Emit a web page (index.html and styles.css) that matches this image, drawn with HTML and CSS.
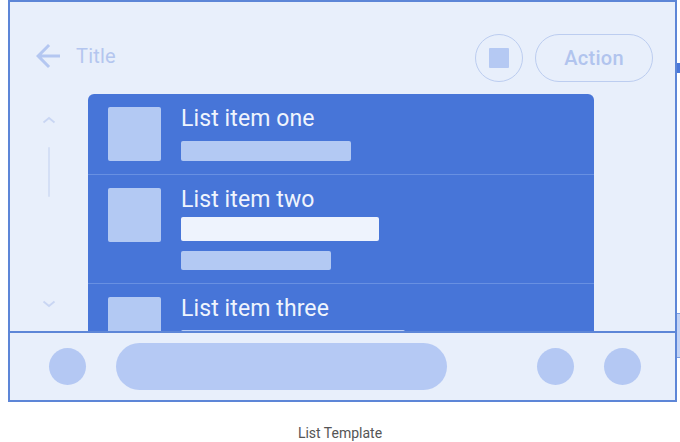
FILE: index.html
```html
<!DOCTYPE html>
<html lang="en">
<head>
<meta charset="utf-8">
<title>List Template</title>
<link rel="stylesheet" href="styles.css">
</head>
<body>
<div class="stage">
  <div class="frame">
    <header class="topbar">
      <svg class="back" viewBox="0 0 24 24" width="36" height="36" aria-hidden="true">
        <path d="M20 11H7.83l5.59-5.59L12 4l-8 8 8 8 1.41-1.41L7.83 13H20v-2z" fill="currentColor"/>
      </svg>
      <span class="title">Title</span>
      <span class="spacer"></span>
      <button class="icon-btn" type="button"><span class="icon-sq"></span></button>
      <button class="action-btn" type="button">Action</button>
    </header>
    <div class="content">
      <div class="scroller">
        <svg class="chev" viewBox="0 0 16 10" width="16" height="10" aria-hidden="true"><path d="M2.5 7.5l5.5-4.5 5.5 4.5" fill="none" stroke="currentColor" stroke-width="1.8"/></svg>
        <span class="track"></span>
        <svg class="chev chev-down" viewBox="0 0 16 10" width="16" height="10" aria-hidden="true"><path d="M2.5 2.5l5.5 4.5 5.5-4.5" fill="none" stroke="currentColor" stroke-width="1.8"/></svg>
      </div>
      <div class="card">
        <div class="row row-one">
          <span class="thumb"></span>
          <div class="texts">
            <div class="item-title">List item one</div>
            <span class="bar bar-sub w170"></span>
          </div>
        </div>
        <div class="row row-two">
          <span class="thumb"></span>
          <div class="texts">
            <div class="item-title">List item two</div>
            <span class="bar bar-white w198"></span>
            <span class="bar bar-sub2 w150"></span>
          </div>
        </div>
        <div class="row row-three">
          <span class="thumb"></span>
          <div class="texts">
            <div class="item-title">List item three</div>
            <span class="bar bar-white3 w224"></span>
          </div>
        </div>
      </div>
    </div>
    <footer class="bottombar">
      <span class="dot"></span>
      <span class="pill"></span>
      <span class="spacer"></span>
      <span class="dot"></span>
      <span class="dot"></span>
    </footer>
  </div>
  <span class="peek peek-top"></span>
  <span class="peek peek-bottom"></span>
</div>
<p class="caption">List Template</p>
</body>
</html>
```

FILE: styles.css
```css
* { box-sizing: border-box; }

html, body {
  margin: 0;
  padding: 0;
  background: #ffffff;
  font-family: Roboto, "Noto Sans", "Liberation Sans", sans-serif;
}

.stage {
  position: relative;
  width: 680px;
  height: 402px;
  padding-left: 8px;
}

.frame {
  width: 669px;
  height: 402px;
  border: 2px solid #5d86d7;
  background: #e8effb;
  display: flex;
  flex-direction: column;
  overflow: hidden;
}

.topbar {
  height: 92px;
  flex: none;
  display: flex;
  align-items: center;
  padding: 31px 22px 11px 20px;
}

.back {
  color: #b4c7f1;
  flex: none;
  margin-top: -4px;
}

.title {
  margin-left: 10px;
  margin-top: -4px;
  font-size: 20px;
  color: #b4c6ef;
  letter-spacing: 0.2px;
}

.spacer { flex: 1; }

.icon-btn {
  width: 48px;
  height: 48px;
  border-radius: 50%;
  border: 1.5px solid #bccdf0;
  background: transparent;
  display: flex;
  align-items: center;
  justify-content: center;
  padding: 0;
}

.icon-sq {
  width: 20px;
  height: 20px;
  background: #b5c9f3;
  border-radius: 1px;
}

.action-btn {
  margin-left: 12px;
  width: 118px;
  height: 48px;
  border-radius: 24px;
  border: 1.5px solid #bccdf0;
  background: transparent;
  font-family: Roboto, "Noto Sans", sans-serif;
  font-size: 20px;
  font-weight: 500;
  color: #b1c4ee;
  letter-spacing: 0.3px;
  padding: 0;
}

.content {
  flex: 1;
  display: flex;
  overflow: hidden;
}

.scroller {
  width: 78px;
  flex: none;
  display: flex;
  flex-direction: column;
  align-items: center;
  padding: 21px 1px 22px 0;
  color: #c9d6f3;
}

.track {
  width: 2px;
  height: 50px;
  margin-top: 22px;
  background: #d4dff5;
  border-radius: 1px;
}

.chev-down { margin-top: auto; }

.card {
  width: 506px;
  flex: none;
  background: #4775d8;
  border-radius: 6px 6px 0 0;
  align-self: flex-start;
}

.row {
  display: flex;
  gap: 20px;
  padding: 12px 20px 13px 20px;
}

.row + .row { border-top: 1px solid #6890e2; }

.thumb {
  width: 53px;
  height: 54px;
  margin-top: 1px;
  background: #b3c9f3;
  border-radius: 2px;
  flex: none;
}

.texts {
  display: flex;
  flex-direction: column;
  align-items: flex-start;
}

.item-title {
  font-size: 23px;
  line-height: 26px;
  color: #eff4fd;
  letter-spacing: 0.1px;
}

.bar { display: block; border-radius: 2px; }

.bar-sub {
  height: 20px;
  margin-top: 9px;
  background: #b3c9f3;
}

.bar-white {
  height: 24px;
  margin-top: 4px;
  background: #eef3fd;
}

.bar-sub2 {
  height: 19px;
  margin-top: 10px;
  background: #b3c9f3;
}

.bar-white3 {
  height: 24px;
  margin-top: 8px;
  background: #b9cdf5;
}

.w170 { width: 170px; }
.w198 { width: 198px; }
.w150 { width: 150px; }
.w224 { width: 224px; }

.row-one { height: 80px; }

.bottombar {
  flex: none;
  height: 69px;
  border-top: 2px solid #5d86d7;
  background: #e8effb;
  display: flex;
  align-items: center;
  padding: 0 34px 0 39px;
}

.dot {
  width: 37px;
  height: 37px;
  border-radius: 50%;
  background: #b4c8f3;
  flex: none;
}

.dot + .dot { margin-left: 30px; }

.pill {
  margin-left: 30px;
  width: 331px;
  height: 47px;
  border-radius: 24px;
  background: #b5c9f4;
  flex: none;
}

.peek {
  position: absolute;
  left: 677px;
  width: 3px;
}

.peek-top {
  top: 63px;
  height: 10px;
  background: #4a78d9;
}

.peek-bottom {
  top: 313px;
  height: 45px;
  background: #c3d3f5;
  border-top: 1px solid #7c9fe3;
  border-bottom: 1px solid #7c9fe3;
}

.caption {
  margin: 21px 0 0 0;
  text-align: center;
  font-size: 14px;
  line-height: 20px;
  color: #555555;
}
```
